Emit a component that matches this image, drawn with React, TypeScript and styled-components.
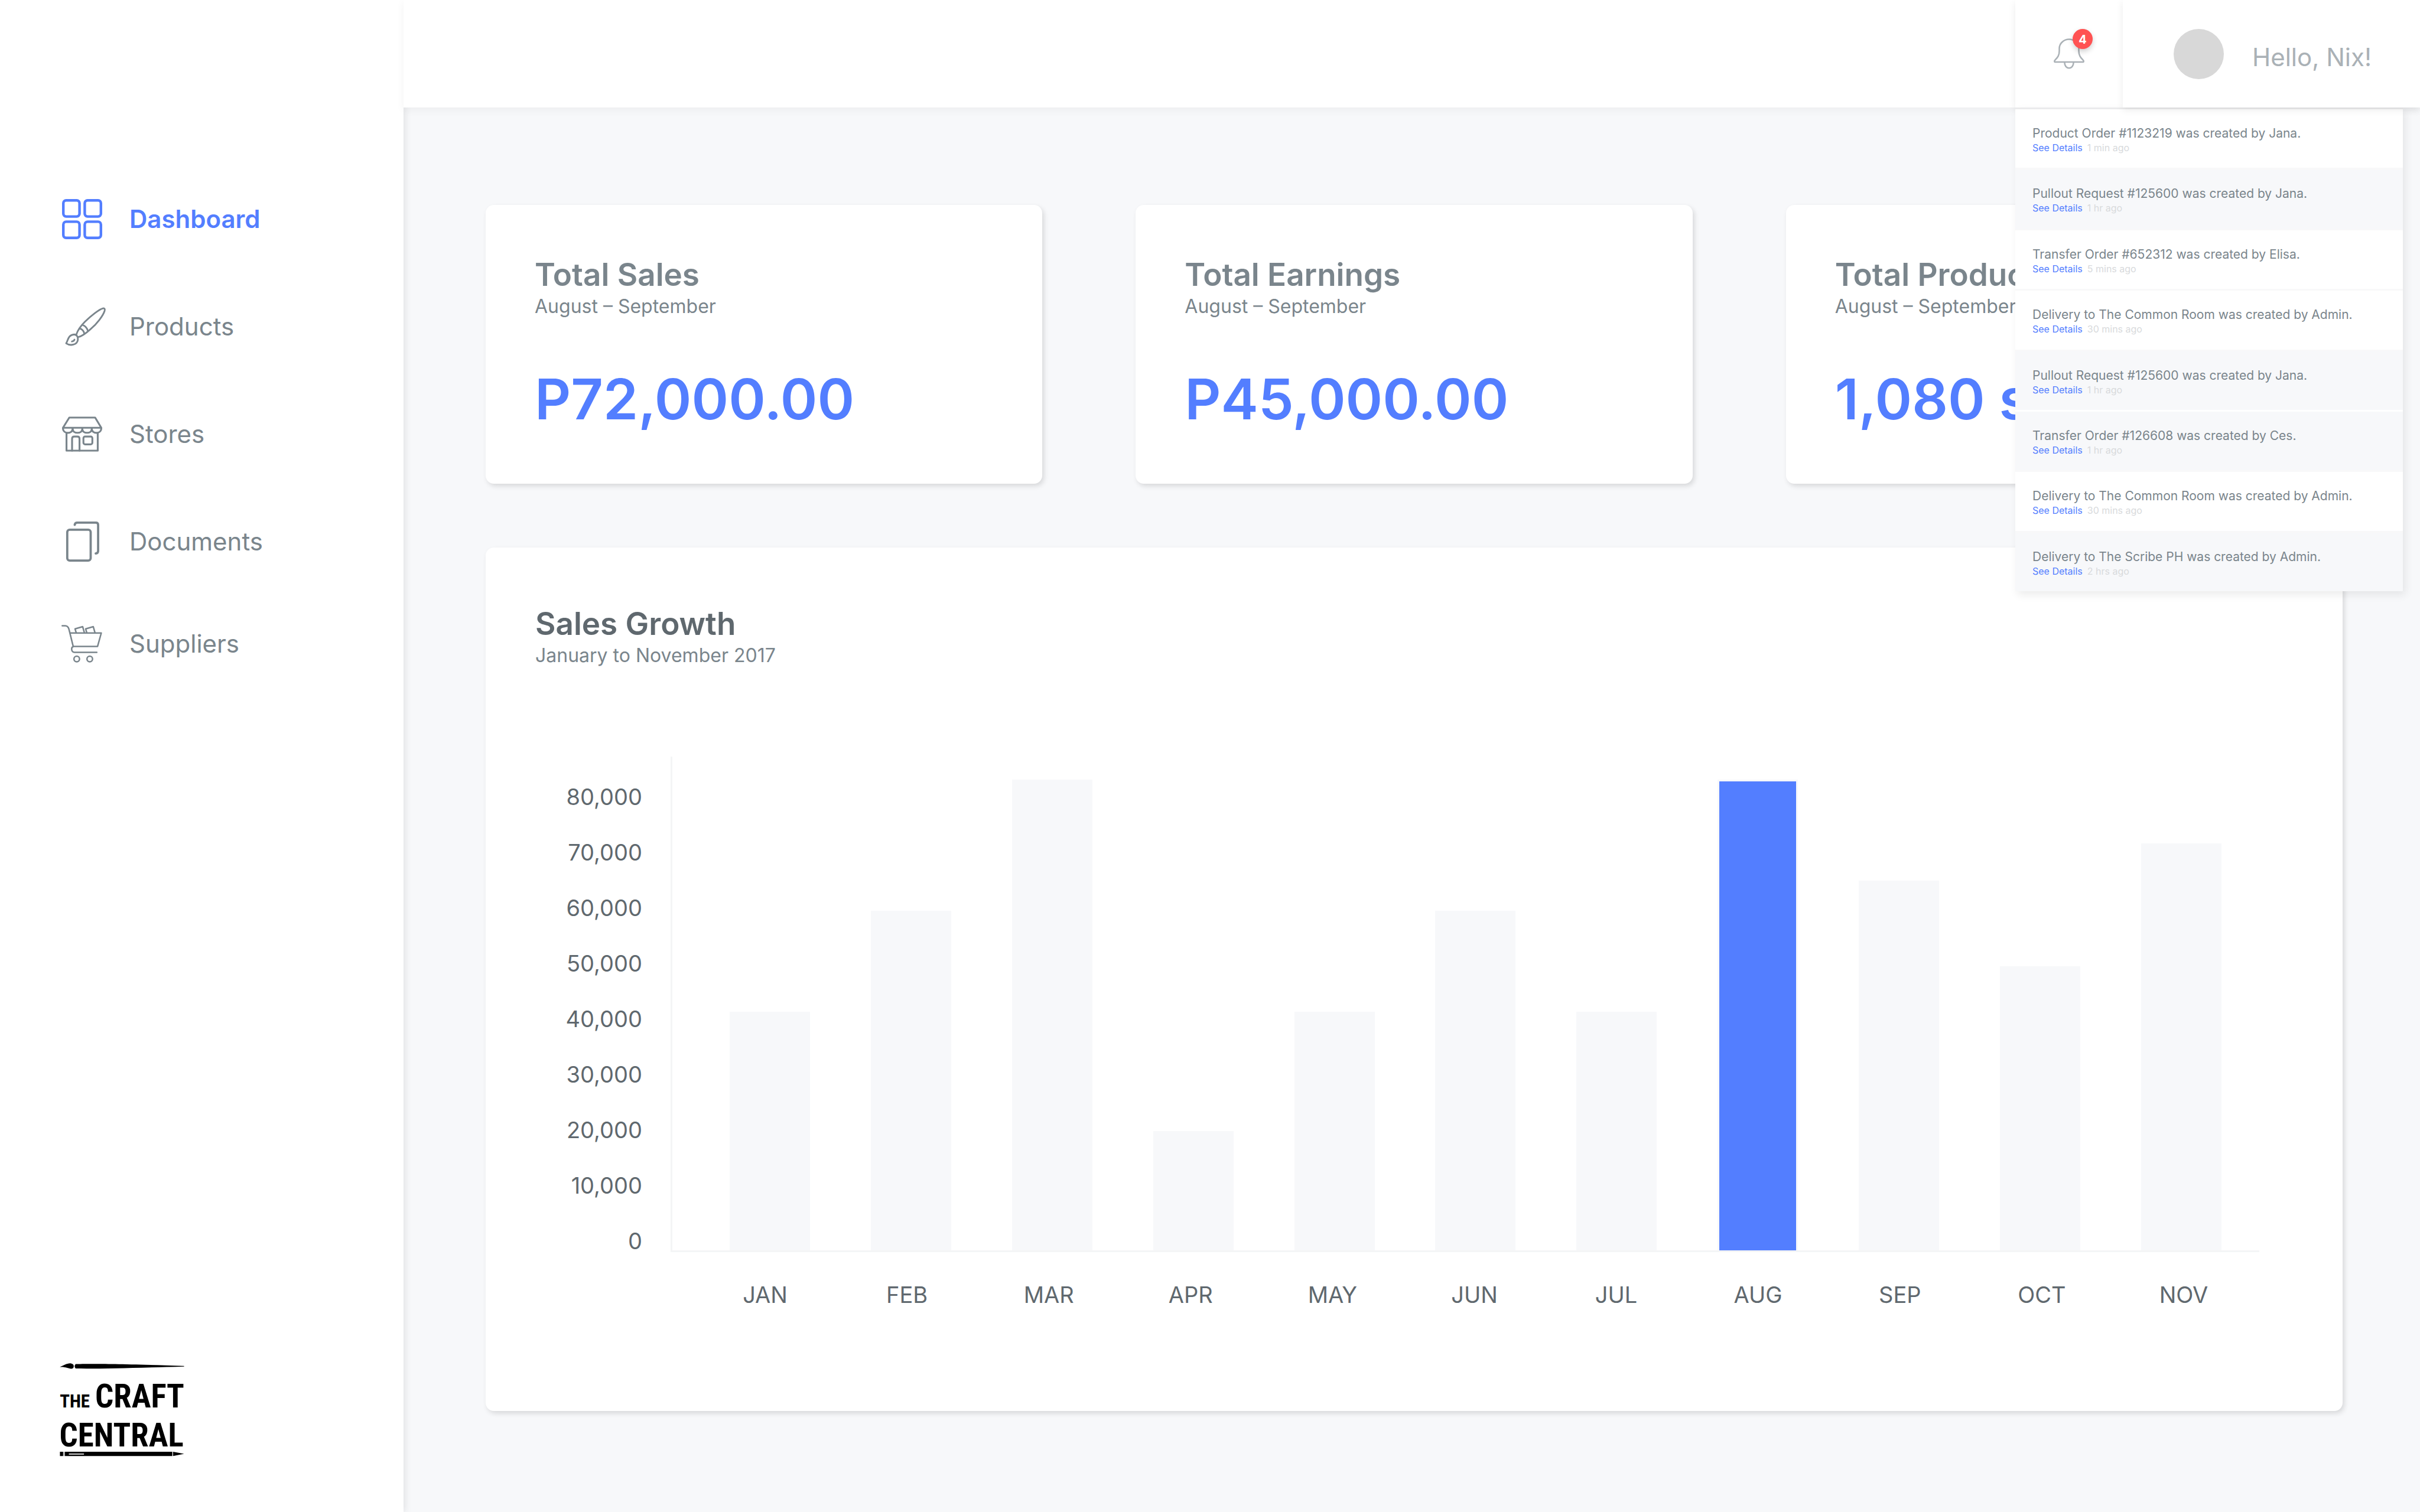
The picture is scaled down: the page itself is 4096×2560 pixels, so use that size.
import React from "react";
import styled, { createGlobalStyle } from "styled-components";

const color = {
  blue: "#537eff",
  slate: "#7a858c",
  dark: "#5f686e",
  pale: "#aab1b6",
  faint: "#d8dadc",
  page: "#f7f8fa",
  axis: "#f4f5f6",
  red: "#ff5252",
  white: "#ffffff",
};

const GlobalStyle = createGlobalStyle`
  *, *::before, *::after { box-sizing: border-box; }
  body {
    margin: 0;
    background: ${color.page};
    color: ${color.slate};
    font-family: Inter, "Liberation Sans", sans-serif;
    font-weight: 400;
  }
  h1, h2, p, ul, ol { margin: 0; padding: 0; font-weight: inherit; }
  ul, ol { list-style: none; }
  a { color: inherit; text-decoration: none; }
`;

const Page = styled.div`
  display: flex;
  min-height: 100vh;
`;

const Sidebar = styled.aside`
  position: relative;
  z-index: 1;
  flex: 0 0 683px;
  display: flex;
  flex-direction: column;
  justify-content: space-between;
  padding: 280px 0 94px 101px;
  background: ${color.white};
  box-shadow: 2px 0 12px rgba(0, 0, 0, 0.1);
`;

const NavList = styled.ul`
  display: grid;
  grid-template-rows: repeat(4, 182px) 164px;
  padding-left: 4px;
`;

const NavLink = styled.a<{ $active?: boolean }>`
  display: flex;
  align-items: center;
  gap: 46px;
  height: 100%;
  font-size: 42px;
  line-height: 50px;
  font-weight: ${(p) => (p.$active ? 600 : 400)};
  color: ${(p) => (p.$active ? color.blue : color.slate)};
`;

const NavIcon = styled.svg`
  width: 68px;
  height: 68px;
  overflow: visible;
  fill: none;
  stroke: currentColor;
  stroke-linecap: round;
  stroke-linejoin: round;
`;

const LogoMark = styled.svg`
  width: 211px;
  height: 159px;
  overflow: visible;
`;

const LogoText = styled.text`
  font-family: "Roboto Condensed", "Liberation Sans Narrow", "DejaVu Sans Condensed", sans-serif;
  font-weight: 700;
`;

const Column = styled.div`
  flex: 1;
  min-width: 0;
  display: flex;
  flex-direction: column;
`;

const Header = styled.header`
  position: relative;
  z-index: 2;
  display: flex;
  justify-content: flex-end;
  height: 182px;
  background: ${color.white};
  box-shadow: 0 4px 14px rgba(0, 0, 0, 0.05);
`;

const HeaderCell = styled.div<{ $width: number }>`
  position: relative;
  display: flex;
  align-items: center;
  width: ${(p) => p.$width}px;
  background: ${color.white};
  box-shadow: 0 4px 12px rgba(0, 0, 0, 0.08);
`;

const BellButton = styled.button`
  position: relative;
  width: 52px;
  height: 52px;
  margin: 0 auto;
  padding: 0;
  border: 0;
  background: none;
  color: ${color.pale};
  font-family: inherit;
`;

const BellIcon = styled.svg`
  display: block;
  width: 52px;
  height: 52px;
  fill: none;
  stroke: currentColor;
  stroke-width: 8;
`;

const Badge = styled.span`
  position: absolute;
  top: -16px;
  left: 32px;
  width: 34px;
  height: 34px;
  border-radius: 50%;
  background: ${color.red};
  color: ${color.white};
  font-size: 20px;
  font-weight: 700;
  line-height: 36px;
  text-align: center;
  box-shadow: 0 4px 10px rgba(0, 0, 0, 0.2);
`;

const Profile = styled.div`
  display: flex;
  align-items: flex-end;
  gap: 48px;
  padding-left: 86px;
`;

const Avatar = styled.span`
  width: 85px;
  height: 85px;
  border-radius: 50%;
  background: #d8d8d8;
`;

const Greeting = styled.span`
  font-size: 42px;
  line-height: 74px;
  color: ${color.pale};
`;

const Notifications = styled.ul`
  position: absolute;
  top: 100%;
  left: 0;
  display: grid;
  grid-auto-rows: 1fr;
  width: 656px;
  height: 819px;
  box-shadow: 4px 6px 14px rgba(0, 0, 0, 0.08);
`;

const Notice = styled.li<{ $read: boolean; $edge: string }>`
  padding: 29px 29px 0;
  border-top: 3px solid ${(p) => p.$edge};
  background: ${(p) => (p.$read ? color.page : color.white)};
`;

const NoticeText = styled.p`
  font-size: 21px;
  line-height: 24px;
  white-space: nowrap;
`;

const NoticeMeta = styled.p`
  display: flex;
  gap: 8px;
  margin-top: 2px;
  font-size: 16px;
  line-height: 20px;
  color: ${color.faint};
`;

const DetailsLink = styled.a`
  color: ${color.blue};
`;

const Main = styled.main`
  flex: 1;
  display: flex;
  flex-direction: column;
  gap: 108px;
  padding: 165px 131px 171px 139px;
`;

const CardGrid = styled.section`
  display: grid;
  grid-template-columns: repeat(3, 1fr);
  gap: 158px;
`;

const Card = styled.article`
  padding: 88px 83px;
  border-radius: 14px;
  background: ${color.white};
  box-shadow: 3px 4px 8px rgba(0, 0, 0, 0.13);
`;

const ChartCard = styled(Card)`
  flex: 1;
  padding: 99px 84px 0;
`;

const Title = styled.h2<{ $dark?: boolean }>`
  font-size: 53px;
  line-height: 60px;
  font-weight: 600;
  color: ${(p) => (p.$dark ? color.dark : color.slate)};
`;

const Subtitle = styled.p`
  margin-top: 6px;
  font-size: 32px;
  line-height: 36px;
`;

const Amount = styled.p`
  margin-top: 84px;
  font-size: 95px;
  line-height: 110px;
  font-weight: 600;
  color: ${color.blue};
  white-space: nowrap;
`;

const Chart = styled.div`
  display: grid;
  grid-template-columns: 181px 1fr;
  column-gap: 48px;
  align-items: start;
  margin-top: 153px;
  padding-right: 57px;
  font-size: 38px;
  color: ${color.dark};
`;

const Scale = styled.ol`
  padding-top: 21px;
  text-align: right;
  line-height: 94px;
`;

const Plot = styled.div`
  display: flex;
  align-items: flex-end;
  justify-content: space-between;
  height: 839px;
  padding: 0 64px 0 97px;
  border-left: 3px solid ${color.axis};
  border-bottom: 3px solid ${color.axis};
`;

const Bar = styled.div<{ $active: boolean }>`
  width: 136px;
  border: 3px solid ${color.page};
  border-bottom: 0;
  background: ${(p) => (p.$active ? color.blue : color.page)};
`;

const Months = styled.ol`
  display: grid;
  grid-template-columns: repeat(11, 1fr);
  margin-top: 50px;
  padding: 0 8px 0 40px;
  line-height: 44px;
  text-align: center;
`;

const DashboardIcon = () => (
  <NavIcon viewBox="93 111 216 216" strokeWidth="14" aria-hidden="true">
    <rect x="100" y="118" width="87" height="87" rx="15" />
    <rect x="215" y="118" width="87" height="87" rx="15" />
    <rect x="100" y="233" width="87" height="87" rx="15" />
    <rect x="215" y="233" width="87" height="87" rx="15" />
  </NavIcon>
);

const BrushIcon = () => (
  <NavIcon viewBox="93 682 216 216" strokeWidth="9" aria-hidden="true">
    <path d="M170 832 C176 814 196 784 216 764 C246 734 294 696 313 692 C322 690 325 697 322 705 C314 731 280 776 246 804 C226 822 196 844 180 846" />
    <path d="M206 783 C214 783 229 799 230 809" />
    <path d="M190 801 C198 801 211 815 212 825" />
    <path d="M115 880 C126 866 124 834 158 832 C172 833 181 846 178 862 C173 888 139 896 115 880 Z" />
    <path d="M146 870 C153 869 158 866 160 860" />
  </NavIcon>
);

const StoreIcon = () => (
  <NavIcon viewBox="93 123 216 216" strokeWidth="10" aria-hidden="true">
    <path d="M132 142 H271 L304 197 H98 Z" />
    <path d="M98 199 C98 232 150 232 150 203 C150 231 202 231 202 203 C202 231 253 231 253 203 C253 232 304 232 304 199" />
    <path d="M150 199 V205 M202 199 V205 M253 199 V205" />
    <path d="M117 226 V320 H285 V226" />
    <path d="M147 320 V256 Q147 244 159 244 H175 Q187 244 187 256 V320" />
    <rect x="208" y="244" width="48" height="42" rx="9" />
  </NavIcon>
);

const DocumentsIcon = () => (
  <NavIcon viewBox="93 699 216 216" strokeWidth="12" aria-hidden="true">
    <rect x="121" y="743" width="126" height="166" rx="13" />
    <path d="M161 717 Q163 705 175 705 H275 Q287 705 287 717 V857 Q287 870 274 871" />
  </NavIcon>
);

const CartIcon = () => (
  <NavIcon viewBox="93 1248 216 216" strokeWidth="8" aria-hidden="true">
    <path d="M94 1259 H110 C122 1259 127 1266 130 1277 L153 1370 H284 L304 1298 H136" />
    <path d="M153 1371 C141 1375 141 1400 160 1402 H280" />
    <path d="M169 1296 L163 1276 L204 1264 L213 1296" />
    <path d="M226 1296 L220 1276 L261 1264 L270 1296" />
    <circle cx="172" cy="1438" r="15" />
    <circle cx="242" cy="1438" r="15" />
  </NavIcon>
);

const Logo = () => (
  <LogoMark viewBox="80 100 668 504" role="img" aria-label="The Craft Central">
    <path d="M80 124 C100 116 118 103 138 104 C150 106 156 112 155 120 C155 128 151 133 143 133 C122 131 108 121 80 124 Z" />
    <path d="M166 108 C220 107 330 104 747 118 V121 C500 128 300 134 166 132 C158 125 158 114 166 108 Z" />
    <LogoText x="80" y="342" fontSize="98">THE</LogoText>
    <LogoText x="748" y="342" fontSize="174" textAnchor="end">CRAFT</LogoText>
    <LogoText x="78" y="551" fontSize="174">CENTRAL</LogoText>
    <path d="M81 579 H98 V602 H81 Z M107 579 H684 V602 H107 Z M688 579 L747 590 L688 602 Z" />
    <path d="M100 579 H104 V602 H100 Z" fill="#999999" />
    <path d="M129 588 H210 V594 H129 Z" fill="#dddddd" />
  </LogoMark>
);

const navItems = [
  { label: "Dashboard", icon: <DashboardIcon />, active: true },
  { label: "Products", icon: <BrushIcon /> },
  { label: "Stores", icon: <StoreIcon /> },
  { label: "Documents", icon: <DocumentsIcon /> },
  { label: "Suppliers", icon: <CartIcon /> },
];

const separator = "#f8f8f9";

const notices = [
  { text: "Product Order #1123219 was created by Jana.", time: "1 min ago", read: false, edge: "#ebebec" },
  { text: "Pullout Request #125600 was created by Jana.", time: "1 hr ago", read: true, edge: separator },
  { text: "Transfer Order #652312 was created by Elisa.", time: "5 mins ago", read: false, edge: separator },
  { text: "Delivery to The Common Room was created by Admin.", time: "30 mins ago", read: false, edge: separator },
  { text: "Pullout Request #125600 was created by Jana.", time: "1 hr ago", read: true, edge: separator },
  { text: "Transfer Order #126608 was created by Ces.", time: "1 hr ago", read: true, edge: color.white },
  { text: "Delivery to The Common Room was created by Admin.", time: "30 mins ago", read: false, edge: separator },
  { text: "Delivery to The Scribe PH was created by Admin.", time: "2 hrs ago", read: true, edge: separator },
];

const cards = [
  { title: "Total Sales", amount: "P72,000.00" },
  { title: "Total Earnings", amount: "P45,000.00" },
  { title: "Total Products", amount: "1,080 sold" },
];

const scale = ["80,000", "70,000", "60,000", "50,000", "40,000", "30,000", "20,000", "10,000", "0"];

const scaleTop = 89000;

const sales = [
  { month: "JAN", value: 43000 },
  { month: "FEB", value: 61200 },
  { month: "MAR", value: 84800 },
  { month: "APR", value: 21500 },
  { month: "MAY", value: 43000 },
  { month: "JUN", value: 61200 },
  { month: "JUL", value: 43000 },
  { month: "AUG", value: 84800 },
  { month: "SEP", value: 66600 },
  { month: "OCT", value: 51200 },
  { month: "NOV", value: 73400 },
];

export default function App() {
  return (
    <>
      <GlobalStyle />
      <Page>
        <Sidebar>
          <nav aria-label="Main">
            <NavList>
              {navItems.map((item) => (
                <li key={item.label}>
                  <NavLink href="#" $active={item.active}>
                    {item.icon}
                    {item.label}
                  </NavLink>
                </li>
              ))}
            </NavList>
          </nav>
          <Logo />
        </Sidebar>
        <Column>
          <Header>
            <HeaderCell $width={182}>
              <BellButton type="button" aria-label="Notifications">
                <BellIcon viewBox="290 149 164 164" aria-hidden="true">
                  <path d="M299 275 C292 275 293 268 298 264 C311 251 320 240 320 216 V203 C320 175 345 154 372 154 C399 154 424 175 424 203 V216 C424 240 433 251 446 264 C451 268 452 275 445 275 Z" />
                  <path d="M348 277 C348 318 396 318 396 277" />
                </BellIcon>
                <Badge>4</Badge>
              </BellButton>
              <Notifications>
                {notices.map((n, i) => (
                  <Notice key={i} $read={n.read} $edge={n.edge}>
                    <NoticeText>{n.text}</NoticeText>
                    <NoticeMeta>
                      <DetailsLink href="#">See Details</DetailsLink>
                      <span>{n.time}</span>
                    </NoticeMeta>
                  </Notice>
                ))}
              </Notifications>
            </HeaderCell>
            <HeaderCell $width={503}>
              <Profile>
                <Avatar />
                <Greeting>Hello, Nix!</Greeting>
              </Profile>
            </HeaderCell>
          </Header>
          <Main>
            <CardGrid>
              {cards.map((c) => (
                <Card key={c.title}>
                  <Title>{c.title}</Title>
                  <Subtitle>August – September</Subtitle>
                  <Amount>{c.amount}</Amount>
                </Card>
              ))}
            </CardGrid>
            <ChartCard>
              <Title $dark>Sales Growth</Title>
              <Subtitle>January to November 2017</Subtitle>
              <Chart>
                <Scale>
                  {scale.map((s) => (
                    <li key={s}>{s}</li>
                  ))}
                </Scale>
                <div>
                  <Plot>
                    {sales.map((s) => (
                      <Bar
                        key={s.month}
                        $active={s.month === "AUG"}
                        style={{ height: `${(s.value / scaleTop) * 100}%` }}
                      />
                    ))}
                  </Plot>
                  <Months>
                    {sales.map((s) => (
                      <li key={s.month}>{s.month}</li>
                    ))}
                  </Months>
                </div>
              </Chart>
            </ChartCard>
          </Main>
        </Column>
      </Page>
    </>
  );
}
